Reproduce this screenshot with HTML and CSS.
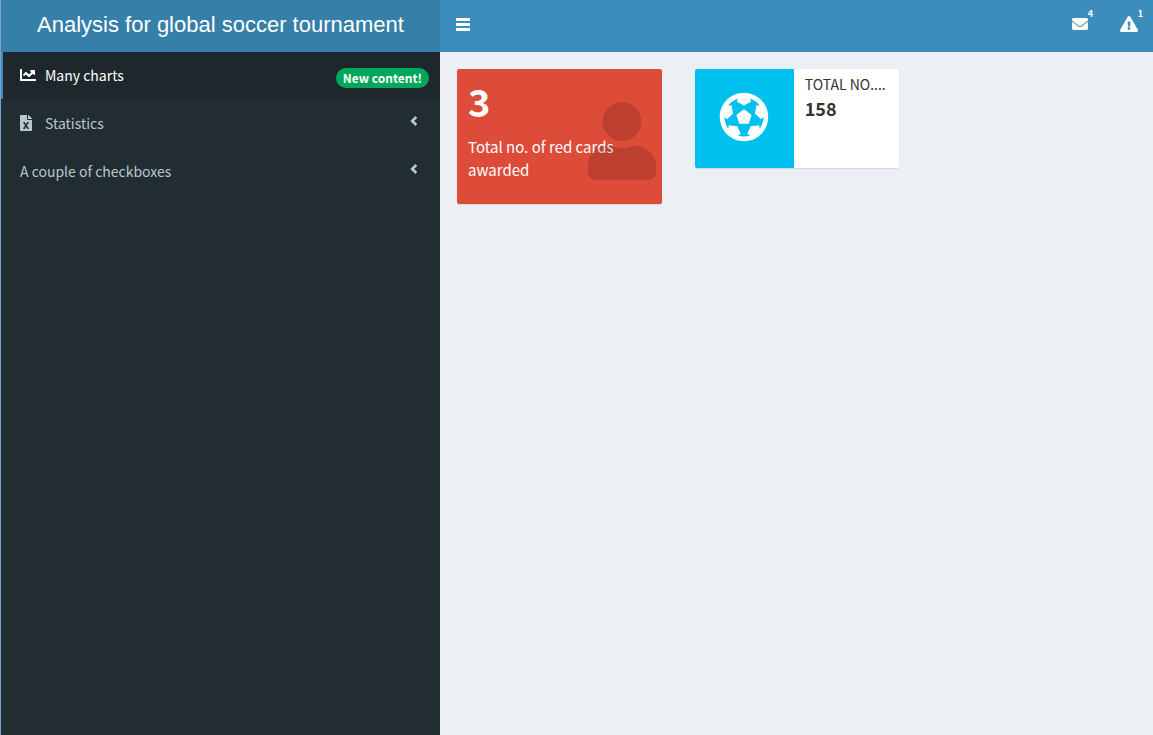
FILE: index.html
```
<!DOCTYPE html>
<html lang="en">

<head>
    <meta charset="UTF-8">
    <meta name="viewport" content="width=device-width, initial-scale=1.0">
    <title>Analysis for global soccer tournament</title>
    <link rel="stylesheet" href="styles.css">
</head>

<body>
    <div class="wrapper">
        <header class="main-header">
            <a href="#" class="logo">Analysis for global soccer tournament</a>
            <nav class="navbar">
                <button class="nav-button" type="button" aria-label="Toggle navigation">
                    <svg class="icon-bars" viewBox="0 0 14 13"><path d="M0 0h14v3H0zM0 5h14v3H0zM0 10h14v3H0z" /></svg>
                </button>
                <div class="navbar-menu">
                    <button class="nav-button" type="button" aria-label="Messages">
                        <svg class="icon-envelope" viewBox="0 0 512 512"><path d="M502.3 190.8c3.9-3.1 9.7-.2 9.7 4.7V400c0 26.5-21.5 48-48 48H48c-26.5 0-48-21.5-48-48V195.6c0-5 5.7-7.8 9.7-4.7 22.4 17.4 52.1 39.5 154.1 113.6 21.1 15.4 56.7 47.8 92.2 47.6 35.7.3 72-32.8 92.3-47.6 102-74.1 131.6-96.3 154-113.7zM256 320c23.2.4 56.6-29.2 73.4-41.4 132.7-96.3 142.8-104.7 173.4-128.7 5.8-4.5 9.2-11.5 9.2-18.9v-19c0-26.5-21.5-48-48-48H48c-26.5 0-48 21.5-48 48v19c0 7.4 3.4 14.3 9.2 18.9 30.6 23.9 40.7 32.4 173.4 128.7 16.8 12.2 50.2 41.8 73.4 41.4z" /></svg>
                        <span class="label">4</span>
                    </button>
                    <button class="nav-button" type="button" aria-label="Notifications">
                        <svg class="icon-warning" viewBox="0 0 576 512"><path d="M569.517 440.013C587.975 472.007 564.806 512 527.94 512H48.054c-36.937 0-59.999-40.055-41.577-71.987L246.423 23.985c18.467-32.009 64.72-31.951 83.154 0l239.94 416.028zM288 354c-25.405 0-46 20.595-46 46s20.595 46 46 46 46-20.595 46-46-20.595-46-46-46zm-43.673-165.346l7.418 136c.347 6.364 5.609 11.346 11.982 11.346h48.546c6.373 0 11.635-4.982 11.982-11.346l7.418-136c.375-6.874-5.098-12.654-11.982-12.654h-63.383c-6.884 0-12.356 5.78-11.981 12.654z" /></svg>
                        <span class="label">1</span>
                    </button>
                </div>
            </nav>
        </header>

        <aside class="sidebar">
            <ul class="sidebar-menu">
                <li>
                    <a href="#" class="active">
                        <svg class="icon-chart" viewBox="0 0 512 512"><path d="M496 384H64V80c0-8.84-7.16-16-16-16H16C7.16 64 0 71.16 0 80v336c0 17.67 14.33 32 32 32h464c8.84 0 16-7.16 16-16v-32c0-8.84-7.16-16-16-16zM464 96H345.94c-21.38 0-32.09 25.85-16.97 40.97l32.4 32.4L288 242.75l-73.37-73.37c-12.5-12.5-32.76-12.5-45.25 0l-68.69 68.69c-6.25 6.25-6.25 16.38 0 22.63l22.62 22.62c6.25 6.25 16.38 6.25 22.63 0L192 237.25l73.37 73.37c12.5 12.5 32.76 12.5 45.25 0l96-96 32.4 32.4c15.12 15.12 40.97 4.41 40.97-16.97V112c.01-8.84-7.15-16-15.99-16z" /></svg>
                        <span>Many charts</span>
                        <small class="badge">New content!</small>
                    </a>
                </li>
                <li>
                    <a href="#">
                        <svg class="icon-file" viewBox="0 0 384 512"><path d="M224 136V0H24C10.7 0 0 10.7 0 24v464c0 13.3 10.7 24 24 24h336c13.3 0 24-10.7 24-24V160H248c-13.2 0-24-10.8-24-24zm60.1 106.5L224 336l60.1 93.5c5.1 8-.6 18.5-10.1 18.5h-34.9c-4.4 0-8.5-2.4-10.6-6.3C208.9 405.5 192 373 192 373c-6.4 14.8-10 20-36.6 68.8-2.1 3.9-6.1 6.3-10.5 6.3H110c-9.5 0-15.2-10.5-10.1-18.5l60.3-93.5-60.3-93.5c-5.2-8 .6-18.5 10.1-18.5h34.8c4.4 0 8.5 2.4 10.6 6.3 26.1 48.8 20 33.6 36.6 68.5 0 0 6.1-11.7 36.6-68.5 2.1-3.9 6.2-6.3 10.6-6.3H274c9.5-.1 15.2 10.4 10.1 18.4zM384 121.9v6.1H256V0h6.1c6.4 0 12.5 2.5 17 7l97.9 98c4.5 4.5 7 10.6 7 16.9z" /></svg>
                        <span>Statistics</span>
                        <svg class="icon-angle" viewBox="0 0 8 10"><path d="M6.3 1L2.2 5l4.1 4" /></svg>
                    </a>
                </li>
                <li>
                    <a href="#">
                        <span>A couple of checkboxes</span>
                        <svg class="icon-angle" viewBox="0 0 8 10"><path d="M6.3 1L2.2 5l4.1 4" /></svg>
                    </a>
                </li>
            </ul>
        </aside>

        <main class="content">
            <div class="small-box">
                <h3>3</h3>
                <p>Total no. of red cards awarded</p>
                <svg class="icon-user" viewBox="0 0 448 512"><path d="M224 256c70.7 0 128-57.3 128-128S294.7 0 224 0 96 57.3 96 128s57.3 128 128 128zm89.6 32h-16.7c-22.2 10.2-46.9 16-72.9 16s-50.6-5.8-72.9-16h-16.7C60.2 288 0 348.2 0 422.4V464c0 26.5 21.5 48 48 48h352c26.5 0 48-21.5 48-48v-41.6c0-74.2-60.2-134.4-134.4-134.4z" /></svg>
            </div>
            <div class="info-box">
                <div class="info-box-icon">
                    <svg class="icon-ball" viewBox="0 0 512 512"><path fill-rule="evenodd" d="M504 256c0 136.967-111.033 248-248 248S8 392.967 8 256 119.033 8 256 8s248 111.033 248 248zm-48 0l-.003-.282-26.064 22.741-62.679-58.5 16.454-84.355 34.303 3.072c-24.889-34.216-60.004-60.089-100.709-73.141l13.651 31.939L256 139l-74.953-41.525 13.651-31.939c-40.631 13.028-75.78 38.87-100.709 73.141l34.565-3.073 16.192 84.355-62.678 58.5-26.064-22.741-.003.282c0 43.015 13.497 83.952 38.472 117.991l7.704-33.897 85.138 10.447 36.301 77.826-29.902 17.786c40.202 13.122 84.29 13.148 124.572 0l-29.902-17.786 36.301-77.826 85.138-10.447 7.704 33.897C442.503 339.952 456 299.015 456 256zm-248.102 69.571l-29.894-91.312L256 177.732l77.996 56.527-29.622 91.312h-96.476z" /></svg>
                </div>
                <div class="info-box-content">
                    <span class="info-box-text">Total no....</span>
                    <span class="info-box-number">158</span>
                </div>
            </div>
        </main>
    </div>
</body>

</html>
```
FILE: styles.css
```
* {
    box-sizing: border-box;
}

body {
    margin: 0;
    font-family: "Noto Sans CJK SC", "Open Sans", sans-serif;
    font-size: 14px;
    line-height: 22px;
    color: #333;
    background-color: #ecf0f5;
}

a {
    text-decoration: none;
}

svg {
    display: block;
    flex: none;
    fill: currentColor;
}

.wrapper {
    display: grid;
    grid-template-columns: 439px 1fr;
    grid-template-rows: auto 1fr;
    min-height: 100vh;
    border-left: 1px solid #7b9fd3;
}

/* header */
.main-header {
    grid-column: 1 / 3;
    display: grid;
    grid-template-columns: subgrid;
    height: 52px;
}

.logo {
    font-family: "Liberation Sans", Arial, sans-serif;
    font-size: 22px;
    line-height: 50px;
    text-align: center;
    color: #fff;
    background-color: #367fa9;
}

.navbar {
    display: flex;
    justify-content: space-between;
    background-color: #3c8dbc;
}

.navbar-menu {
    display: flex;
    gap: 1px;
}

.nav-button {
    position: relative;
    display: flex;
    align-items: center;
    height: 48px;
    padding: 0 15px 0 16px;
    border: none;
    color: #fff;
    background: transparent;
    font-family: inherit;
    cursor: pointer;
}

.nav-button:hover {
    background-color: #367fa9;
}

.label {
    position: absolute;
    top: 9px;
    right: 10px;
    font-size: 9px;
    font-weight: bold;
    line-height: 10px;
}

.icon-bars {
    width: 14px;
    height: 13px;
}

.icon-envelope {
    width: 16px;
    height: 16px;
}

.icon-warning {
    width: 18px;
    height: 16px;
}

/* sidebar */
.sidebar {
    background-color: #222d32;
}

.sidebar-menu {
    display: grid;
    gap: 1px;
    margin: 0;
    padding: 0;
    list-style: none;
}

.sidebar-menu a {
    display: flex;
    align-items: center;
    height: 47px;
    padding: 0 11px 2px 17px;
    border-left: 2px solid transparent;
    color: #b8c7ce;
}

.sidebar-menu a:hover,
.sidebar-menu a.active {
    color: #fff;
    background-color: #1e282c;
    border-left-color: #3c8dbc;
}

.icon-chart {
    width: 16px;
    height: 16px;
    margin-right: 9px;
}

.icon-file {
    width: 12px;
    height: 16px;
    margin-right: 13px;
}

.badge {
    margin: 7px 0 0 auto;
    padding: 0 7px;
    border-radius: 10px;
    font-size: 12px;
    font-weight: bold;
    line-height: 20px;
    color: #fff;
    background-color: #00a65a;
}

.icon-angle {
    width: 8px;
    height: 10px;
    margin: 0 11px 3px auto;
    fill: none;
    stroke: currentColor;
    stroke-width: 2.6;
}

/* content */
.content {
    display: grid;
    grid-template-columns: repeat(3, minmax(0, 1fr));
    gap: 33px;
    align-items: start;
    padding: 17px 16px 17px 17px;
}

.small-box,
.info-box {
    border-radius: 2px;
    box-shadow: 0 1px 1px rgba(0, 0, 0, 0.1);
}

.small-box {
    position: relative;
    padding: 10px 11px 23px;
    color: #fff;
    background-color: #dd4b39;
}

.small-box h3 {
    margin: 0 0 12px;
    font-size: 38px;
    font-weight: bold;
    line-height: 44px;
}

.small-box p {
    margin: 0;
    font-size: 15px;
    line-height: 23px;
}

.icon-user {
    position: absolute;
    top: 33px;
    right: 6px;
    width: 68px;
    height: 78px;
    color: rgba(0, 0, 0, 0.15);
}

.info-box {
    display: flex;
    min-height: 99px;
    background-color: #fff;
}

.info-box-icon {
    display: flex;
    flex: none;
    align-items: center;
    justify-content: center;
    width: 99px;
    padding-bottom: 3px;
    border-radius: 2px 0 0 2px;
    color: #fff;
    background-color: #00c0ef;
}

.icon-ball {
    width: 50px;
    height: 50px;
}

.info-box-content {
    min-width: 0;
    padding: 4px 11px;
}

.info-box-text,
.info-box-number {
    display: block;
}

.info-box-text {
    white-space: nowrap;
    text-transform: uppercase;
}

.info-box-number {
    font-size: 18px;
    font-weight: bold;
    line-height: 26px;
}
```
